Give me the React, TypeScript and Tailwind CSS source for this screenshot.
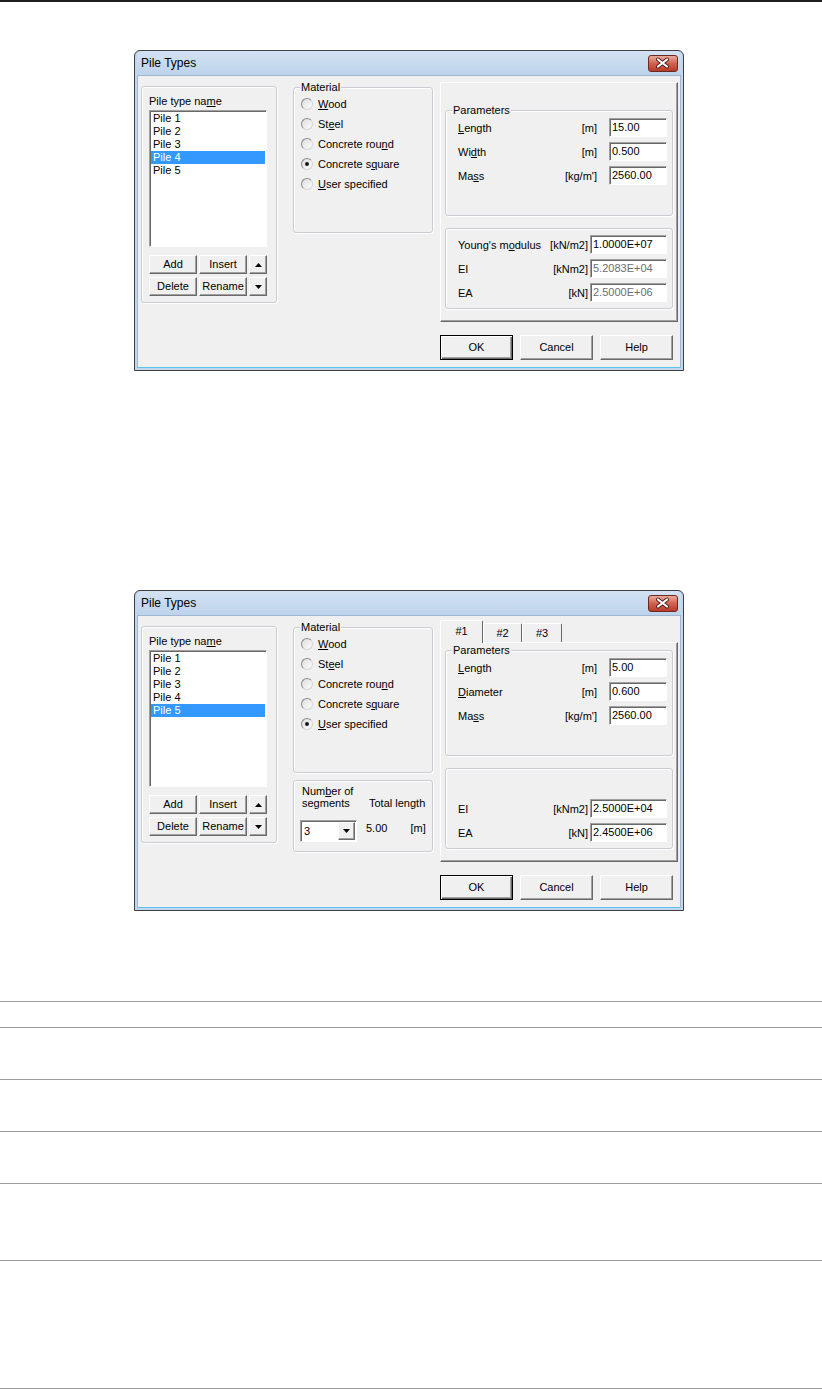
import React from "react";

const raised =
  "border border-t-white border-l-white border-r-[#696969] border-b-[#696969] shadow-[inset_-1px_-1px_0_#a0a0a0]";
const sunken =
  "border border-t-[#a0a0a0] border-l-[#a0a0a0] border-r-white border-b-white shadow-[inset_1px_1px_0_#696969]";

const U = ({ children }: { children: React.ReactNode }) => (
  <span className="underline underline-offset-[1px] decoration-[1px]">{children}</span>
);

function Btn({ className, children, def }: { className: string; children: React.ReactNode; def?: boolean }) {
  return (
    <div
      className={`flex items-center justify-center bg-[#f0f0f0] ${
        def
          ? "border border-black shadow-[inset_1px_1px_0_#fff,inset_-1px_-1px_0_#696969,inset_-2px_-2px_0_#a0a0a0]"
          : raised
      } ${className}`}
    >
      {children}
    </div>
  );
}

function Tri({ down }: { down?: boolean }) {
  return (
    <svg width="7" height="4" viewBox="0 0 7 4">
      {down ? <path d="M0 0 H7 L3.5 4 Z" fill="#000" /> : <path d="M0 4 H7 L3.5 0 Z" fill="#000" />}
    </svg>
  );
}

function Group({
  label,
  className,
  children,
}: {
  label?: React.ReactNode;
  className: string;
  children?: React.ReactNode;
}) {
  return (
    <div
      className={`relative border border-[#c9cdd1] rounded-[3px] shadow-[inset_1px_1px_0_#fff,1px_1px_0_#fff] ${className}`}
    >
      {label && (
        <span className="absolute -top-[7px] left-[6px] bg-[#f0f0f0] px-[1px] leading-[13px]">{label}</span>
      )}
      {children}
    </div>
  );
}

function Radio({ checked, children }: { checked?: boolean; children: React.ReactNode }) {
  return (
    <div className="flex items-center h-[20px]">
      <span className="w-[12px] h-[12px] rounded-full border border-t-[#8a8a8a] border-l-[#8a8a8a] border-r-[#d6d6d6] border-b-[#d6d6d6] bg-linear-to-br from-[#dedede] to-[#fdfdfd] flex items-center justify-center">
        {checked && <span className="w-[4px] h-[4px] rounded-full bg-[#1a1a1a]" />}
      </span>
      <span className="ml-[5px]">{children}</span>
    </div>
  );
}

function Field({
  label,
  unit,
  value,
  wide,
  disabled,
  hidden,
}: {
  label?: React.ReactNode;
  unit?: string;
  value?: string;
  wide?: boolean;
  disabled?: boolean;
  hidden?: boolean;
}) {
  if (hidden) return <div className="h-[19px]" />;
  return (
    <div className="flex items-center h-[19px] pl-[12px] pr-[5px]">
      <span className="flex-1 pt-[2px]">{label}</span>
      <span className="pt-[2px]">{unit}</span>
      <div
        className={`h-[19px] ${wide ? "w-[77px] ml-[2px]" : "w-[58px] ml-[12px]"} bg-white ${sunken} flex items-center pl-[2px] ${
          disabled ? "text-[#6d6d6d]" : "text-black"
        }`}
      >
        {value}
      </div>
    </div>
  );
}

function TitleBar() {
  return (
    <div className="h-[24px] flex items-center pl-[4px] pr-[3px] bg-linear-to-b from-[#d3e2f3] to-[#bdd3eb] rounded-t-[5px]">
      <span className="text-[12px] text-black">Pile Types</span>
      <div className="ml-auto w-[30px] h-[17px] rounded-[3px] border border-[#6a2a22] bg-linear-to-b from-[#e9aa9c] via-[#d0634f] to-[#b8392a] flex items-center justify-center">
        <svg width="28" height="15" viewBox="0 0 28 15">
          <path d="M9 3.5 L18 10.5 M18 3.5 L9 10.5" stroke="#4b1b15" strokeWidth="4" strokeLinecap="round" />
          <path d="M9 3.5 L18 10.5 M18 3.5 L9 10.5" stroke="#ffffff" strokeWidth="2.2" strokeLinecap="round" />
        </svg>
      </div>
    </div>
  );
}

function Dialog({ v2 }: { v2?: boolean }) {
  const sel = v2 ? 4 : 3;
  return (
    <div className="ml-[134px] w-[550px] h-[321px] flex flex-col border border-[#3f3f3f] rounded-t-[6px] bg-[#c2d6ed] px-[2px] pb-[2px]">
      <TitleBar />
      <div className="flex-1 bg-[#f0f0f0] border border-[#9fb7d1] border-b-[#5cc3ec] flex items-start pl-[3px]">
        {/* left group */}
        <Group className="mt-[10px] w-[136px] h-[217px] pl-[7px] pt-[8px]">
          <div className="leading-[13px]">
            Pile type na<U>m</U>e
          </div>
          <div className={`mt-[2px] w-[118px] h-[137px] bg-white ${sunken} p-[1px]`}>
            {["Pile 1", "Pile 2", "Pile 3", "Pile 4", "Pile 5"].map((p, i) => (
              <div
                key={p}
                className={`h-[13px] leading-[13px] px-[2px] ${i === sel ? "bg-[#3399ff] text-white" : "text-black"}`}
              >
                {p}
              </div>
            ))}
          </div>
          <div className="mt-[8px] flex flex-col gap-[3px]">
            <div className="flex gap-[2px]">
              <Btn className="w-[48px] h-[19px]">Add</Btn>
              <Btn className="w-[48px] h-[19px]">Insert</Btn>
              <Btn className="w-[18px] h-[19px]">
                <Tri />
              </Btn>
            </div>
            <div className="flex gap-[2px]">
              <Btn className="w-[48px] h-[19px]">Delete</Btn>
              <Btn className="w-[48px] h-[19px]">Rename</Btn>
              <Btn className="w-[18px] h-[19px]">
                <Tri down />
              </Btn>
            </div>
          </div>
        </Group>

        {/* middle column */}
        <div className="ml-[16px] w-[140px] flex flex-col">
          <Group label="Material" className="mt-[11px] h-[146px] pt-[6px] pl-[7px]">
            <Radio>
              <U>W</U>ood
            </Radio>
            <Radio>
              St<U>e</U>el
            </Radio>
            <Radio>
              Concrete rou<U>n</U>d
            </Radio>
            <Radio checked={!v2}>
              Concrete s<U>q</U>uare
            </Radio>
            <Radio checked={v2}>
              <U>U</U>ser specified
            </Radio>
          </Group>
          {v2 && (
            <Group className="mt-[7px] h-[72px]">
              <div className="flex pl-[8px] pt-[4px] leading-[12px]">
                <div className="w-[67px]">
                  Num<U>b</U>er of
                  <br />
                  segments
                </div>
                <div className="mt-[12px]">Total length</div>
              </div>
              <div className="flex items-start mt-[11px] pl-[6px]">
                <div className={`w-[57px] h-[22px] bg-white ${sunken} flex items-center`}>
                  <span className="pl-[3px] flex-1">3</span>
                  <Btn className="w-[17px] h-[18px] mr-[1px]">
                    <Tri down />
                  </Btn>
                </div>
                <span className="ml-[9px] mt-[2px] leading-[13px]">5.00</span>
                <span className="ml-[23px] mt-[2px] leading-[13px]">[m]</span>
              </div>
            </Group>
          )}
        </div>

        {/* right column */}
        <div className="ml-[7px] w-[238px] flex flex-col">
          {v2 && (
            <div className="mt-[4px] h-[22px] flex items-end">
              <div className="relative z-10 -mb-[1px] w-[43px] h-[23px] bg-[#f0f0f0] border border-t-white border-l-white border-r-[#696969] border-b-0 rounded-t-[2px] flex items-center justify-center pb-[1px]">
                #1
              </div>
              <div className="w-[39px] h-[19px] bg-[#f0f0f0] border border-t-white border-l-white border-r-[#696969] border-b-0 rounded-t-[2px] flex items-center justify-center">
                #2
              </div>
              <div className="w-[40px] h-[19px] bg-[#f0f0f0] border border-t-white border-l-white border-r-[#696969] border-b-0 rounded-t-[2px] flex items-center justify-center">
                #3
              </div>
            </div>
          )}
          <div className={`${v2 ? "h-[220px]" : "mt-[6px] h-[240px]"} ${raised} bg-[#f0f0f0]`}>
            <Group label="Parameters" className={`${v2 ? "mt-[7px]" : "mt-[27px]"} ml-[4px] w-[228px] h-[106px]`}>
              <div className="flex flex-col gap-[5px] pt-[7px]">
                <Field
                  label={
                    <>
                      <U>L</U>ength
                    </>
                  }
                  unit="[m]"
                  value={v2 ? "5.00" : "15.00"}
                />
                {v2 ? (
                  <Field
                    label={
                      <>
                        <U>D</U>iameter
                      </>
                    }
                    unit="[m]"
                    value="0.600"
                  />
                ) : (
                  <Field
                    label={
                      <>
                        Wi<U>d</U>th
                      </>
                    }
                    unit="[m]"
                    value="0.500"
                  />
                )}
                <Field
                  label={
                    <>
                      Ma<U>s</U>s
                    </>
                  }
                  unit="[kg/m']"
                  value="2560.00"
                />
              </div>
            </Group>
            <Group className="mt-[12px] ml-[4px] w-[228px] h-[81px]">
              <div className="flex flex-col gap-[5px] pt-[6px]">
                {v2 ? (
                  <Field hidden />
                ) : (
                  <Field
                    label={
                      <>
                        Young's m<U>o</U>dulus
                      </>
                    }
                    unit="[kN/m2]"
                    value="1.0000E+07"
                    wide
                  />
                )}
                <Field label="EI" unit="[kNm2]" value={v2 ? "2.5000E+04" : "5.2083E+04"} wide disabled={!v2} />
                <Field label="EA" unit="[kN]" value={v2 ? "2.4500E+06" : "2.5000E+06"} wide disabled={!v2} />
              </div>
            </Group>
          </div>
          <div className="mt-[13px] flex gap-[7px]">
            <Btn def className="w-[73px] h-[25px]">
              OK
            </Btn>
            <Btn className="w-[73px] h-[25px]">Cancel</Btn>
            <Btn className="w-[73px] h-[25px]">Help</Btn>
          </div>
        </div>
      </div>
    </div>
  );
}

export default function App() {
  return (
    <div className="w-[822px] min-h-[1389px] bg-white text-[11px] leading-[13px] text-black font-['Liberation_Sans',Arial,sans-serif]">
      <div className="h-[2px] bg-[#1f1f1f]" />
      <div className="pt-[48px]">
        <Dialog />
      </div>
      <div className="pt-[219px]">
        <Dialog v2 />
      </div>
      <div className="mt-[90px]">
        <div className="h-[26px] border-t border-[#9c9c9c]" />
        <div className="h-[52px] border-t border-[#9c9c9c]" />
        <div className="h-[52px] border-t border-[#9c9c9c]" />
        <div className="h-[52px] border-t border-[#9c9c9c]" />
        <div className="h-[77px] border-t border-[#9c9c9c]" />
        <div className="h-[129px] border-y border-[#9c9c9c]" />
      </div>
    </div>
  );
}
